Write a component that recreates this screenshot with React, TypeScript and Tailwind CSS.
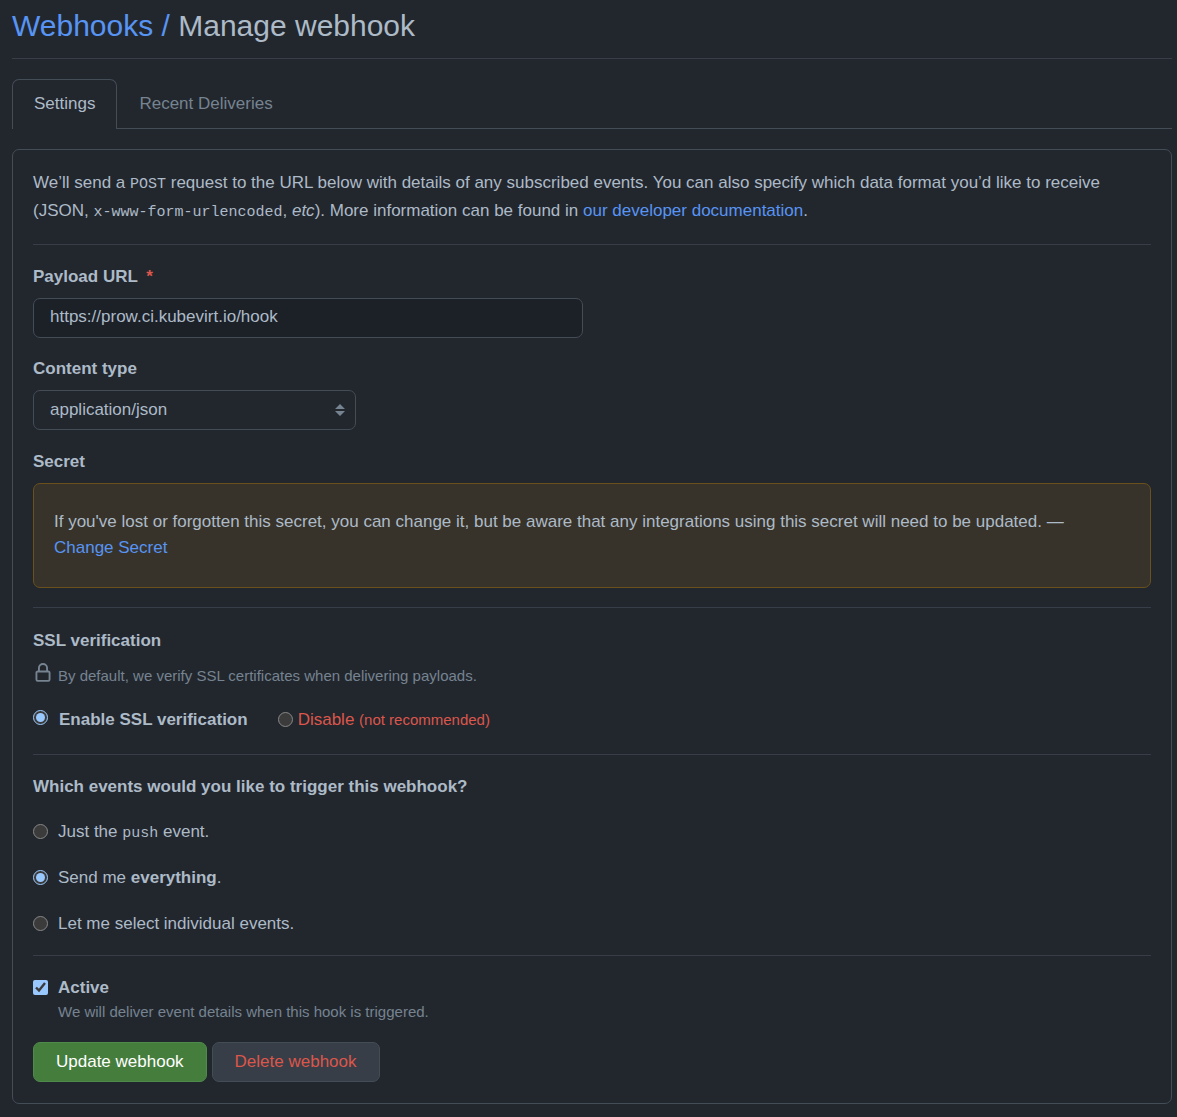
import type { ReactNode } from "react";

function Divider() {
  return <hr className="border-0 border-t border-[#373e47]" />;
}

function Code({ children }: { children: ReactNode }) {
  return <code className="font-['Liberation_Mono',monospace] text-[15px] leading-none">{children}</code>;
}

function EventOption({ checked = false, children }: { checked?: boolean; children: ReactNode }) {
  return (
    <label className="flex w-fit items-center gap-2.5">
      <input type="radio" name="events" defaultChecked={checked} className="mb-0.5 size-[15px]" />
      <span>{children}</span>
    </label>
  );
}

export default function App() {
  return (
    <main className="min-h-screen bg-[#22272e] pt-1 pr-[5px] pb-[13px] pl-3 font-['Liberation_Sans',Arial,sans-serif] text-[17px] leading-[26px] text-[#adbac7] scheme-dark">
      <h1 className="border-b border-[#373e47] pb-[10px] text-[30px] leading-[44px]">
        <a href="#webhooks" className="text-[#5894f3]">
          Webhooks /
        </a>{" "}
        Manage webhook
      </h1>

      <nav className="mt-5 flex border-b border-[#444c56]">
        <a
          href="#settings"
          aria-current="page"
          className="-mb-px rounded-t-[7px] border border-b-0 border-[#444c56] bg-[#22272e] px-[21px] pt-[11px] pb-3"
        >
          Settings
        </a>
        <a href="#deliveries" className="px-[22px] pt-3 pb-[11px] text-[#768390]">
          Recent Deliveries
        </a>
      </nav>

      <form className="mt-5 rounded-[7px] border border-[#444c56] px-5 pt-[19px] pb-[21px]">
        <p className="pb-[19px] leading-7">
          We’ll send a <Code>POST</Code> request to the URL below with details of any subscribed events. You can also
          specify which data format you’d like to receive (JSON, <Code>x-www-form-urlencoded</Code>, <em>etc</em>).
          More information can be found in{" "}
          <a href="#docs" className="text-[#5894f3]">
            our developer documentation
          </a>
          .
        </p>
        <Divider />

        <label htmlFor="url" className="mt-[19px] block font-bold">
          Payload URL <span className="ml-1 text-[#dc564b]">*</span>
        </label>
        <input
          id="url"
          type="text"
          defaultValue="https://prow.ci.kubevirt.io/hook"
          className="mt-2 block h-10 w-full max-w-[550px] rounded-[7px] border border-[#444c56] bg-[#1c2128] px-4 pb-0.5"
        />

        <label htmlFor="type" className="mt-[18px] block font-bold">
          Content type
        </label>
        <div className="relative mt-2 w-full max-w-[323px]">
          <select
            id="type"
            className="block h-10 w-full appearance-none rounded-[7px] border border-[#444c56] bg-[#22272e] px-4"
          >
            <option>application/json</option>
            <option>application/x-www-form-urlencoded</option>
          </select>
          <svg
            viewBox="0 0 10 12"
            className="pointer-events-none absolute top-3.5 right-[11px] h-3 w-2.5 fill-[#768390]"
            aria-hidden="true"
          >
            <path d="M5 0 10 5H0zM5 12 0 7h10z" />
          </svg>
        </div>

        <h2 className="mt-[19px] font-bold">Secret</h2>
        <div className="mt-2 mb-[19px] rounded-[7px] border border-[#6a511c] bg-[#37332a] px-5 pt-[25px] pb-[26px]">
          If you've lost or forgotten this secret, you can change it, but be aware that any integrations using this
          secret will need to be updated. —{" "}
          <a href="#secret" className="inline-block text-[#5894f3]">
            Change Secret
          </a>
        </div>
        <Divider />

        <h2 className="mt-5 font-bold">SSL verification</h2>
        <p className="mt-[9px] flex items-center gap-[5px] text-[15px] text-[#768390]">
          <svg viewBox="0 0 16 16" className="mb-1.5 size-5 fill-current" aria-hidden="true">
            <path d="M4 4a4 4 0 0 1 8 0v2h.25c.966 0 1.75.784 1.75 1.75v5.5A1.75 1.75 0 0 1 12.25 15h-8.5A1.75 1.75 0 0 1 2 13.25v-5.5C2 6.784 2.784 6 3.75 6H4Zm8.25 3.5h-8.5a.25.25 0 0 0-.25.25v5.5c0 .138.112.25.25.25h8.5a.25.25 0 0 0 .25-.25v-5.5a.25.25 0 0 0-.25-.25ZM10.5 6V4a2.5 2.5 0 1 0-5 0v2Z" />
          </svg>
          By default, we verify SSL certificates when delivering payloads.
        </p>
        <div className="mt-[18px] mb-[21px] flex flex-wrap gap-x-[30px]">
          <label className="flex items-center gap-[11px] font-bold">
            <input type="radio" name="ssl" defaultChecked className="mb-1.5 size-[15px]" />
            Enable SSL verification
          </label>
          <label className="flex items-center gap-[5px] text-[#dc564b]">
            <input type="radio" name="ssl" className="mb-0.5 size-[15px]" />
            <span>
              Disable <span className="text-[15px]">(not recommended)</span>
            </span>
          </label>
        </div>
        <Divider />

        <fieldset className="mt-[19px] mb-[18px]">
          <legend className="font-bold">Which events would you like to trigger this webhook?</legend>
          <div className="mt-[19px] flex flex-col gap-5">
            <EventOption>
              Just the <Code>push</Code> event.
            </EventOption>
            <EventOption checked>
              Send me <b>everything</b>.
            </EventOption>
            <EventOption>Let me select individual events.</EventOption>
          </div>
        </fieldset>
        <Divider />

        <label className="mt-[19px] flex w-fit items-center gap-2.5 font-bold">
          <input type="checkbox" defaultChecked aria-describedby="active-note" className="mb-0.5 size-[15px]" />
          Active
        </label>
        <p id="active-note" className="ml-[25px] text-[15px] leading-[22px] text-[#768390]">
          We will deliver event details when this hook is triggered.
        </p>

        <div className="mt-[19px] flex flex-wrap gap-[5px]">
          <button
            type="button"
            className="h-10 rounded-[7px] border border-[#4e8a4a] bg-[#457d3d] px-[22px] text-white"
          >
            Update webhook
          </button>
          <button
            type="button"
            className="h-10 rounded-[7px] border border-[#444c56] bg-[#373e47] px-[22px] text-[#dc564b]"
          >
            Delete webhook
          </button>
        </div>
      </form>
    </main>
  );
}
